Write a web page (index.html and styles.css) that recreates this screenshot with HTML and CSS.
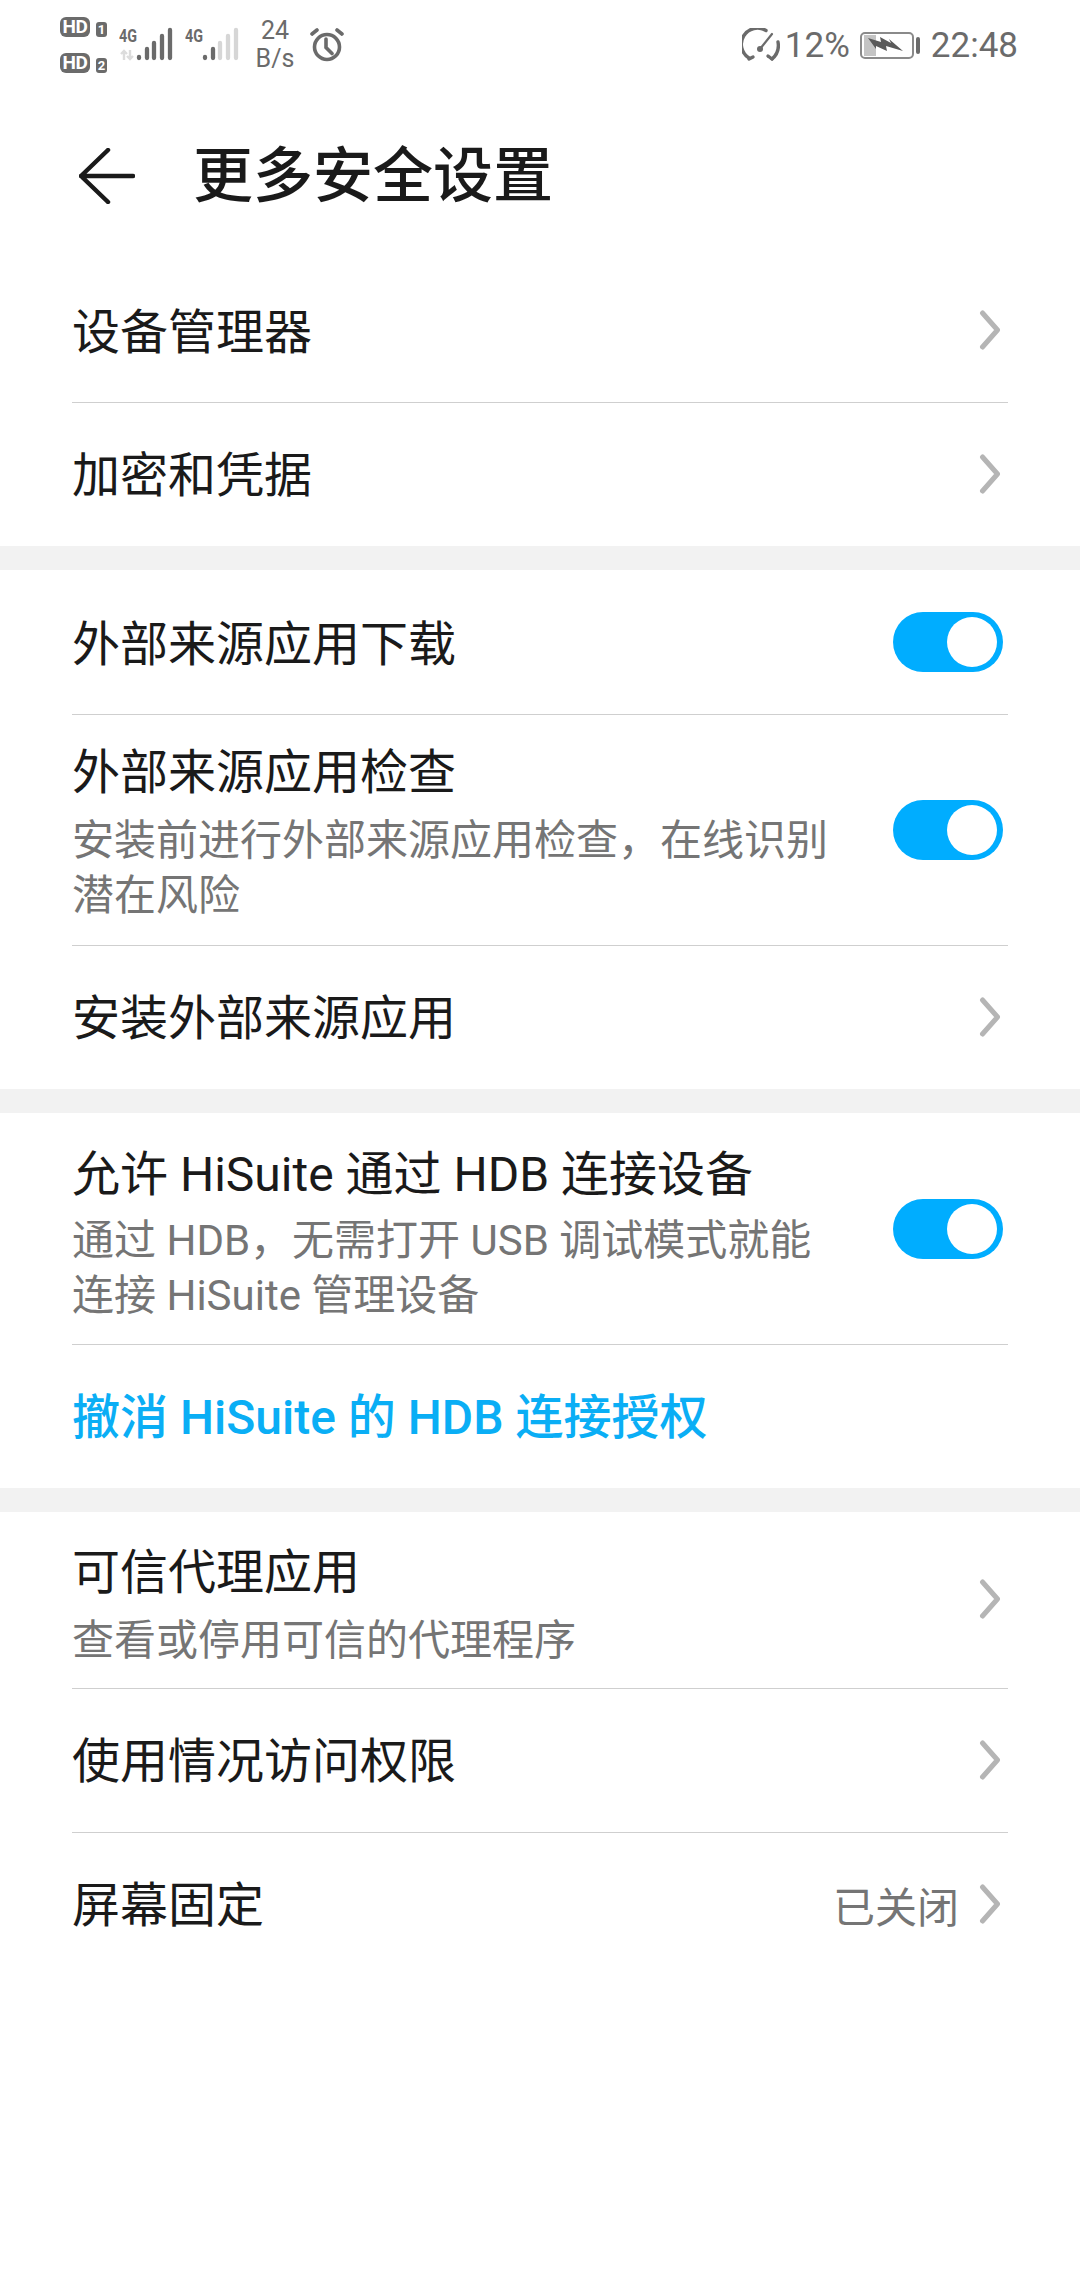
FILE: index.html
```html
<!DOCTYPE html>
<html lang="zh">
<head>
<meta charset="utf-8">
<title>更多安全设置</title>
<link rel="stylesheet" href="styles.css">
</head>
<body>
<div class="status">
  <div class="status-left">
    <div class="hd">
      <div class="hd-line"><span class="hd-pill">HD</span><span class="hd-num">1</span></div>
      <div class="hd-line"><span class="hd-pill">HD</span><span class="hd-num">2</span></div>
    </div>
    <svg class="signal" width="54" height="44" viewBox="0 -4 54 44">
      <text x="0" y="15" class="sig-text" textLength="18" lengthAdjust="spacingAndGlyphs">4G</text>
      <path d="M5 33V24M2 27l3-3 3 3M11 23v9M8 29l3 3 3-3" stroke="#dcdcdc" stroke-width="2.4" fill="none"/>
      <g stroke-width="4.3" stroke-linecap="round" stroke="#6b6b6b" fill="none"><path d="M20 30v1M28 22v9M35 16v15M43 9v22M51 3v28"/></g>
    </svg>
    <svg class="signal" width="54" height="44" viewBox="0 -4 54 44">
      <text x="0" y="15" class="sig-text" textLength="18" lengthAdjust="spacingAndGlyphs">4G</text>
      <g stroke-width="4.3" stroke-linecap="round" fill="none"><path stroke="#6b6b6b" d="M20 30v1M28 22v9"/><path stroke="#d6d6d6" d="M35 16v15M43 9v22M51 3v28"/></g>
    </svg>
    <div class="speed"><span>24</span><span>B/s</span></div>
    <svg class="alarm" width="34" height="34" viewBox="0 0 34 34" fill="none" stroke="#6b6b6b" stroke-width="3.6" stroke-linecap="round">
      <circle cx="17" cy="19" r="12.5"/><path d="M16 11v8.500l6 6M2 6l5-4M32 6l-5-4"/>
    </svg>
  </div>
  <div class="status-right">
    <svg class="gauge" width="38" height="34" viewBox="0 0 38 34" fill="none" stroke="#6b6b6b" stroke-width="3.4" stroke-linecap="round">
      <path d="M7 30A16 16 0 0 1 24 2.500"/><path d="M7 31l4-2"/><path d="M36 14A18 18 0 0 1 30 31"/><path d="M30 31l-4-3"/>
      <path d="M18 21L30 6" stroke-width="2.200"/><circle cx="18" cy="21" r="3" fill="#6b6b6b" stroke="none"/>
    </svg>
    <span class="pct">12%</span>
    <div class="battery">
      <div class="batt-body"><div class="batt-fill"></div>
        <svg class="bolt" width="36" height="16" viewBox="0 0 36 16"><path fill="#5a5a5a" d="M0 1L13 5 12 0 23 6 21 2 35 14 18 9 19 14 8 9 8 12z"/></svg>
      </div>
      <div class="batt-cap"></div>
    </div>
    <span class="clock">22:48</span>
  </div>
</div>

<header class="appbar">
  <svg class="back" width="56" height="56" viewBox="0 0 56 56" fill="none" stroke="#1a1a1a" stroke-width="4.500" stroke-linecap="round" stroke-linejoin="round">
    <path d="M29 2L2 28l27 26M2 28h52"/>
  </svg>
  <h1 class="title">更多安全设置</h1>
</header>

<section class="group">
  <div class="row r143"><div class="body"><div class="label">设备管理器</div></div>
    <svg class="chev" width="24" height="40" viewBox="0 0 24 40"><path d="M3.500 3l15 17-15 17"/></svg></div>
  <div class="row r143"><div class="body"><div class="label">加密和凭据</div></div>
    <svg class="chev" width="24" height="40" viewBox="0 0 24 40"><path d="M3.500 3l15 17-15 17"/></svg></div>
</section>

<section class="group">
  <div class="row r145"><div class="body"><div class="label">外部来源应用下载</div></div>
    <div class="switch"><div class="knob"></div></div></div>
  <div class="row r231"><div class="body"><div class="label">外部来源应用检查</div><div class="sub">安装前进行外部来源应用检查，在线识别潜在风险</div></div>
    <div class="switch"><div class="knob"></div></div></div>
  <div class="row r143"><div class="body"><div class="label">安装外部来源应用</div></div>
    <svg class="chev" width="24" height="40" viewBox="0 0 24 40"><path d="M3.500 3l15 17-15 17"/></svg></div>
</section>

<section class="group">
  <div class="row r232"><div class="body"><div class="label">允许 HiSuite 通过 HDB 连接设备</div><div class="sub">通过 HDB，无需打开 USB 调试模式就能连接 HiSuite 管理设备</div></div>
    <div class="switch"><div class="knob"></div></div></div>
  <div class="row r143"><div class="body"><div class="label link">撤消 HiSuite 的 HDB 连接授权</div></div></div>
</section>

<section class="group">
  <div class="row r177"><div class="body"><div class="label">可信代理应用</div><div class="sub">查看或停用可信的代理程序</div></div>
    <svg class="chev" width="24" height="40" viewBox="0 0 24 40"><path d="M3.500 3l15 17-15 17"/></svg></div>
  <div class="row r144"><div class="body"><div class="label">使用情况访问权限</div></div>
    <svg class="chev" width="24" height="40" viewBox="0 0 24 40"><path d="M3.500 3l15 17-15 17"/></svg></div>
  <div class="row r143"><div class="body"><div class="label">屏幕固定</div></div>
    <span class="value">已关闭</span>
    <svg class="chev" width="24" height="40" viewBox="0 0 24 40"><path d="M3.500 3l15 17-15 17"/></svg></div>
</section>
</body>
</html>
```
FILE: styles.css
```css
* { box-sizing: border-box; }
html, body { margin: 0; padding: 0; }
body {
  width: 1080px; height: 2280px; background: #fff; overflow: hidden;
  font-family: "Roboto", "Noto Sans CJK SC", sans-serif; color: #1a1a1a;
}
.status { height: 88px; display: flex; justify-content: space-between; align-items: center; padding: 2px 62px 0 60px; color: #6b6b6b; }
.status-left, .status-right { display: flex; align-items: center; }
.hd { display: flex; flex-direction: column; gap: 16px; }
.hd-line { display: flex; align-items: flex-start; gap: 6px; height: 20px; }
.hd-pill { background: #6b6b6b; color: #fff; font: 700 19px/20px "Roboto", sans-serif; border-radius: 6px; width: 30px; text-align: center; letter-spacing: -0.5px; }
.hd-num { background: #6b6b6b; color: #fff; font: 700 13px/15px "Roboto", sans-serif; width: 11px; text-align: center; border-radius: 3px; margin-top: 5px; }
.signal { margin-left: 12px; }
.sig-text { font: 700 19px "Roboto", sans-serif; fill: #6b6b6b; }
.speed { display: flex; flex-direction: column; align-items: center; font-size: 25px; line-height: 28px; margin-left: 17px; width: 38px; white-space: nowrap; }
.alarm { margin-left: 16px; }
.gauge { margin-right: 5px; }
.pct, .clock { font-size: 35px; }
.battery { display: flex; align-items: center; gap: 2px; margin: 0 11px 0 10px; }
.batt-body { position: relative; width: 54px; height: 27px; border: 2px solid #8a8a8a; border-radius: 5px; padding: 1px 2px; }
.batt-fill { width: 12px; height: 100%; background: #c4c4c4; }
.bolt { position: absolute; left: 6px; top: 3px; }
.batt-cap { width: 4px; height: 17px; background: #6b6b6b; border-radius: 2px; }

.appbar { height: 172px; display: flex; align-items: center; padding: 3px 0 0 79px; }
.title { font-size: 60px; font-weight: 500; margin: 2px 0 0 58px; line-height: 88px; }
.back { flex: none; }

.group { padding: 0 72px; background: #fff; border-bottom: 24px solid #f2f2f2; }
.group:last-child { border-bottom: 0; }
.row { display: flex; align-items: center; border-bottom: 1px solid #cfcfcf; padding-right: 5px; }
.row:last-child { border-bottom: 0; }
.r143 { height: 143px; }
.r144 { height: 144px; }
.r145 { height: 145px; }
.r231 { height: 231px; }
.r232 { height: 232px; }
.r177 { height: 177px; }
.body { flex: 1; min-width: 0; padding-top: 3px; }
.r145 .body { padding-top: 6px; }
.r231 .body { padding-top: 4px; }
.r232 .body { padding-top: 8px; }
.r177 .body { padding-top: 8px; }
.label { font-size: 48px; line-height: 64px; }
.link { color: #0aaef5; font-weight: 500; }
.sub { font-size: 42px; line-height: 55px; color: #757575; margin-top: 6px; padding-right: 60px; }
.r231 .sub, .r177 .sub { margin-top: 8px; }
.value { font-size: 42px; color: #757575; margin-right: 20px; }
.chev { flex: none; fill: none; stroke: #b5b5b5; stroke-width: 5; stroke-linecap: round; stroke-linejoin: round; margin-bottom: 2px; }
.switch { flex: none; width: 110px; height: 60px; border-radius: 30px; background: #00adff; position: relative; }
.knob { position: absolute; right: 6px; top: 5px; width: 50px; height: 50px; border-radius: 50%; background: #fff; }
```
